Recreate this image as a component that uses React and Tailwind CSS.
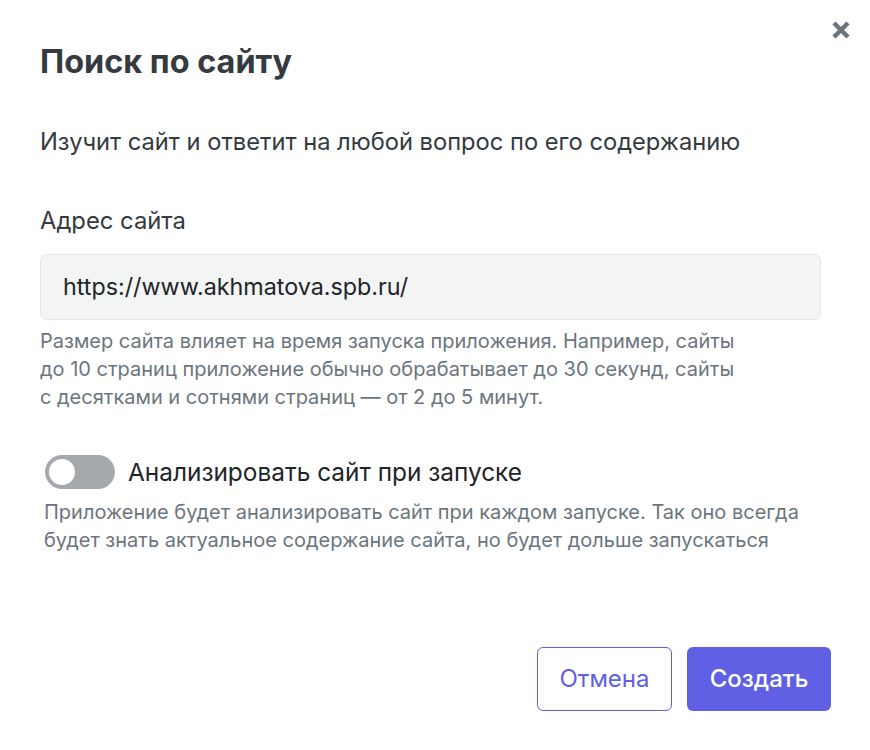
import React from "react";

export default function App() {
  return (
    <div className="relative w-[870px] h-[750px] bg-white flex flex-col font-['Inter',sans-serif] text-[#343a40]">
      <button className="absolute right-[19px] top-[20px] w-[20px] h-[20px] flex items-center justify-center">
        <svg width="20" height="20" viewBox="0 0 20 20">
          <path d="M3 3 L17 17 M17 3 L3 17" stroke="#6c757d" strokeWidth="4.5" />
        </svg>
      </button>

      <div className="flex flex-col pl-10 pr-[49px] pt-[42px]">
        <h1 className="text-[32.4px] leading-[40px] font-bold text-[#343a40]">Поиск по сайту</h1>
        <p className="mt-[44px] text-[23.7px] leading-[32px]">Изучит сайт и ответит на любой вопрос по его содержанию</p>
        <label className="mt-[47px] text-[23.8px] leading-[32px]">Адрес сайта</label>
        <div className="mt-[17px] h-[66px] rounded-[7px] bg-[#f3f4f4] border border-[#e3e5e7] flex items-center px-[22px] text-[23.3px] text-[#212529]">
          https://www.akhmatova.spb.ru/
        </div>
        <p className="mt-[7px] text-[20px] leading-[28px] text-[#6c757d]">
          Размер сайта влияет на время запуска приложения. Например, сайты
          <br />
          до 10 страниц приложение обычно обрабатывает до 30 секунд, сайты
          <br />
          с десятками и сотнями страниц — от 2 до 5 минут.
        </p>
        <div className="mt-[44px] pl-[5px] flex items-center gap-[13px]">
          <div className="w-[70px] h-[34px] rounded-full bg-[#a5a9ad] px-[4px] flex items-center">
            <div className="w-[26px] h-[26px] rounded-full bg-white" />
          </div>
          <span className="text-[24.4px] leading-[32px] text-[#212529]">Анализировать сайт при запуске</span>
        </div>
        <p className="mt-[9px] pl-[4px] text-[20px] leading-[28px] text-[#6c757d]">
          Приложение будет анализировать сайт при каждом запуске. Так оно всегда
          <br />
          будет знать актуальное содержание сайта, но будет дольше запускаться
        </p>
      </div>

      <div className="mt-auto flex justify-end gap-[15px] pr-[39px] pb-[39px] text-[24px]">
        <button className="w-[135px] h-[64px] rounded-[6px] border border-[#6060e4] text-[#6060e4] bg-white">
          Отмена
        </button>
        <button className="w-[144px] h-[64px] rounded-[6px] bg-[#6060e4] text-white font-medium">
          Создать
        </button>
      </div>
    </div>
  );
}
